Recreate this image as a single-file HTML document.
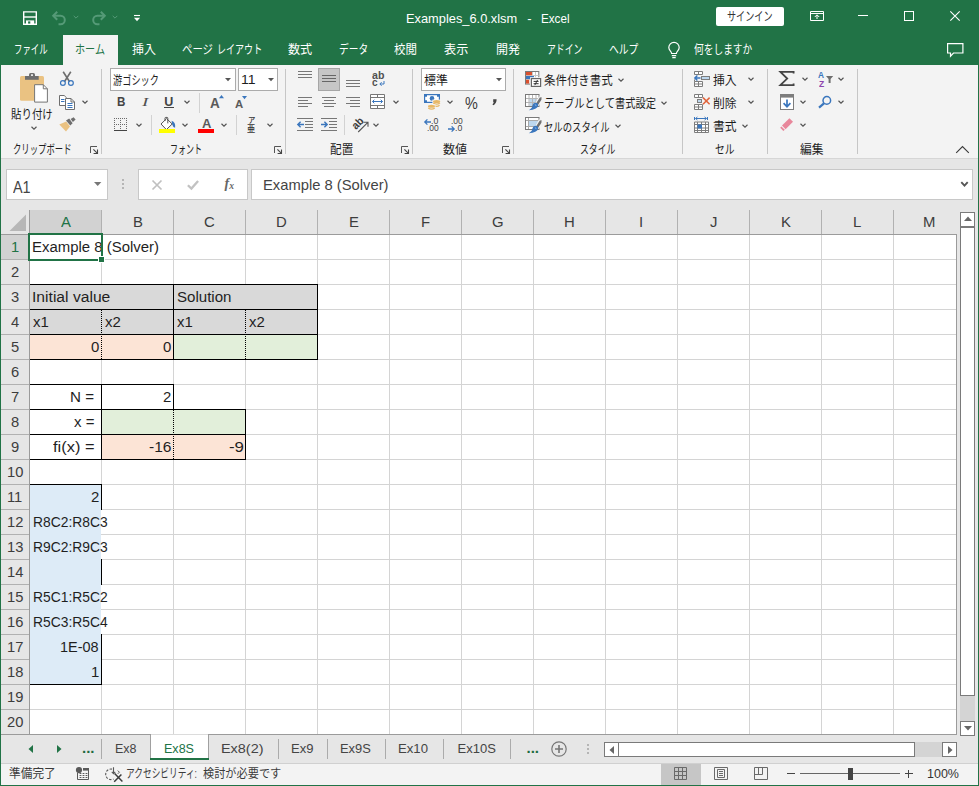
<!DOCTYPE html>
<html lang="ja"><head><meta charset="utf-8"><title>Examples_6.0.xlsm - Excel</title>
<style>
*{box-sizing:border-box;margin:0;padding:0}
html,body{width:979px;height:786px;overflow:hidden;background:#e6e6e6}
body{font-family:"Liberation Sans","Noto Sans CJK JP",sans-serif;font-size:12px;color:#262626;position:relative}
.abs{position:absolute}
svg{overflow:visible}
.t{position:absolute;white-space:nowrap;transform-origin:0 50%;display:block}
</style></head><body>
<div class="abs" style="left:0px;top:0px;width:979px;height:65px;background:#217346;"></div>
<div class="abs" style="left:1px;top:65px;width:977px;height:93px;background:#f3f3f3;"></div>
<div class="abs" style="left:1px;top:158px;width:977px;height:1px;background:#d6d6d6;"></div>
<div class="abs" style="left:1px;top:159px;width:977px;height:51px;background:#e6e6e6;"></div>
<div class="abs" style="left:1px;top:735px;width:977px;height:28px;background:#e6e6e6;"></div>
<div class="abs" style="left:1px;top:763px;width:977px;height:1px;background:#d0d0d0;"></div>
<div class="abs" style="left:1px;top:764px;width:977px;height:21px;background:#f3f3f3;"></div>
<div class="abs" style="left:30px;top:235px;width:927px;height:500px;background:#fff;"></div>
<div class="abs" style="left:30px;top:285px;width:287px;height:49px;background:#d9d9d9;"></div>
<div class="abs" style="left:30px;top:335px;width:143px;height:24px;background:#fce4d6;"></div>
<div class="abs" style="left:174px;top:335px;width:143px;height:24px;background:#e2efda;"></div>
<div class="abs" style="left:102px;top:410px;width:143px;height:24px;background:#e2efda;"></div>
<div class="abs" style="left:102px;top:435px;width:143px;height:24px;background:#fce4d6;"></div>
<div class="abs" style="left:30px;top:485px;width:71px;height:200px;background:#ddebf7;"></div>
<div class="abs" style="left:101px;top:235px;width:1px;height:500px;background:#d4d4d4;"></div>
<div class="abs" style="left:173px;top:235px;width:1px;height:500px;background:#d4d4d4;"></div>
<div class="abs" style="left:245px;top:235px;width:1px;height:500px;background:#d4d4d4;"></div>
<div class="abs" style="left:317px;top:235px;width:1px;height:500px;background:#d4d4d4;"></div>
<div class="abs" style="left:389px;top:235px;width:1px;height:500px;background:#d4d4d4;"></div>
<div class="abs" style="left:461px;top:235px;width:1px;height:500px;background:#d4d4d4;"></div>
<div class="abs" style="left:533px;top:235px;width:1px;height:500px;background:#d4d4d4;"></div>
<div class="abs" style="left:605px;top:235px;width:1px;height:500px;background:#d4d4d4;"></div>
<div class="abs" style="left:677px;top:235px;width:1px;height:500px;background:#d4d4d4;"></div>
<div class="abs" style="left:749px;top:235px;width:1px;height:500px;background:#d4d4d4;"></div>
<div class="abs" style="left:821px;top:235px;width:1px;height:500px;background:#d4d4d4;"></div>
<div class="abs" style="left:893px;top:235px;width:1px;height:500px;background:#d4d4d4;"></div>
<div class="abs" style="left:30px;top:259px;width:927px;height:1px;background:#d4d4d4;"></div>
<div class="abs" style="left:30px;top:284px;width:927px;height:1px;background:#d4d4d4;"></div>
<div class="abs" style="left:30px;top:309px;width:927px;height:1px;background:#d4d4d4;"></div>
<div class="abs" style="left:30px;top:334px;width:927px;height:1px;background:#d4d4d4;"></div>
<div class="abs" style="left:30px;top:359px;width:927px;height:1px;background:#d4d4d4;"></div>
<div class="abs" style="left:30px;top:384px;width:927px;height:1px;background:#d4d4d4;"></div>
<div class="abs" style="left:30px;top:409px;width:927px;height:1px;background:#d4d4d4;"></div>
<div class="abs" style="left:30px;top:434px;width:927px;height:1px;background:#d4d4d4;"></div>
<div class="abs" style="left:30px;top:459px;width:927px;height:1px;background:#d4d4d4;"></div>
<div class="abs" style="left:30px;top:484px;width:927px;height:1px;background:#d4d4d4;"></div>
<div class="abs" style="left:30px;top:509px;width:927px;height:1px;background:#d4d4d4;"></div>
<div class="abs" style="left:30px;top:534px;width:927px;height:1px;background:#d4d4d4;"></div>
<div class="abs" style="left:30px;top:559px;width:927px;height:1px;background:#d4d4d4;"></div>
<div class="abs" style="left:30px;top:584px;width:927px;height:1px;background:#d4d4d4;"></div>
<div class="abs" style="left:30px;top:609px;width:927px;height:1px;background:#d4d4d4;"></div>
<div class="abs" style="left:30px;top:634px;width:927px;height:1px;background:#d4d4d4;"></div>
<div class="abs" style="left:30px;top:659px;width:927px;height:1px;background:#d4d4d4;"></div>
<div class="abs" style="left:30px;top:684px;width:927px;height:1px;background:#d4d4d4;"></div>
<div class="abs" style="left:30px;top:709px;width:927px;height:1px;background:#d4d4d4;"></div>
<div class="abs" style="left:30px;top:309px;width:287px;height:1px;background:#d9d9d9;"></div>
<div class="abs" style="left:101px;top:285px;width:1px;height:24px;background:#d9d9d9;"></div>
<div class="abs" style="left:245px;top:285px;width:1px;height:24px;background:#d9d9d9;"></div>
<div class="abs" style="left:101px;top:335px;width:1px;height:24px;background:#fce4d6;"></div>
<div class="abs" style="left:245px;top:335px;width:1px;height:24px;background:#e2efda;"></div>
<div class="abs" style="left:173px;top:410px;width:1px;height:24px;background:#e2efda;"></div>
<div class="abs" style="left:173px;top:435px;width:1px;height:24px;background:#fce4d6;"></div>
<div class="abs" style="left:30px;top:509px;width:71px;height:1px;background:#ddebf7;"></div>
<div class="abs" style="left:30px;top:534px;width:71px;height:1px;background:#ddebf7;"></div>
<div class="abs" style="left:30px;top:559px;width:71px;height:1px;background:#ddebf7;"></div>
<div class="abs" style="left:30px;top:584px;width:71px;height:1px;background:#ddebf7;"></div>
<div class="abs" style="left:30px;top:609px;width:71px;height:1px;background:#ddebf7;"></div>
<div class="abs" style="left:30px;top:634px;width:71px;height:1px;background:#ddebf7;"></div>
<div class="abs" style="left:30px;top:659px;width:71px;height:1px;background:#ddebf7;"></div>
<div class="abs" style="left:30px;top:284px;width:288px;height:1px;background:#000;"></div>
<div class="abs" style="left:30px;top:309px;width:288px;height:1px;background:#000;"></div>
<div class="abs" style="left:30px;top:334px;width:288px;height:1px;background:#000;"></div>
<div class="abs" style="left:30px;top:359px;width:288px;height:1px;background:#000;"></div>
<div class="abs" style="left:173px;top:284px;width:1px;height:76px;background:#000;"></div>
<div class="abs" style="left:317px;top:284px;width:1px;height:76px;background:#000;"></div>
<div class="abs" style="left:101px;top:310px;width:1px;height:49px;background:none;background:repeating-linear-gradient(to bottom,#000 0 1px,transparent 1px 2px)"></div>
<div class="abs" style="left:245px;top:310px;width:1px;height:49px;background:none;background:repeating-linear-gradient(to bottom,#000 0 1px,transparent 1px 2px)"></div>
<div class="abs" style="left:30px;top:384px;width:144px;height:1px;background:#000;"></div>
<div class="abs" style="left:30px;top:409px;width:216px;height:1px;background:#000;"></div>
<div class="abs" style="left:30px;top:434px;width:216px;height:1px;background:#000;"></div>
<div class="abs" style="left:30px;top:459px;width:216px;height:1px;background:#000;"></div>
<div class="abs" style="left:101px;top:384px;width:1px;height:76px;background:#000;"></div>
<div class="abs" style="left:173px;top:384px;width:1px;height:26px;background:#000;"></div>
<div class="abs" style="left:245px;top:409px;width:1px;height:51px;background:#000;"></div>
<div class="abs" style="left:173px;top:410px;width:1px;height:49px;background:none;background:repeating-linear-gradient(to bottom,#000 0 1px,transparent 1px 2px)"></div>
<div class="abs" style="left:30px;top:484px;width:72px;height:1px;background:#000;"></div>
<div class="abs" style="left:30px;top:684px;width:72px;height:1px;background:#000;"></div>
<div class="abs" style="left:101px;top:484px;width:1px;height:26px;background:#000;"></div>
<div class="abs" style="left:101px;top:559px;width:1px;height:26px;background:#000;"></div>
<div class="abs" style="left:101px;top:634px;width:1px;height:51px;background:#000;"></div>
<div class="abs" style="left:101px;top:510px;width:1px;height:24px;background:#fff;"></div>
<div class="abs" style="left:101px;top:535px;width:1px;height:24px;background:#fff;"></div>
<div class="abs" style="left:101px;top:585px;width:1px;height:24px;background:#fff;"></div>
<div class="abs" style="left:101px;top:610px;width:1px;height:24px;background:#fff;"></div>
<div class="abs" style="left:1px;top:210px;width:957px;height:24px;background:#e6e6e6;"></div>
<div class="abs" style="left:1px;top:235px;width:28px;height:500px;background:#e6e6e6;"></div>
<div class="abs" style="left:30px;top:210px;width:71px;height:24px;background:#d2d2d2;"></div>
<div class="abs" style="left:1px;top:235px;width:28px;height:24px;background:#d2d2d2;"></div>
<div class="abs" style="left:101px;top:210px;width:1px;height:24px;background:#b1b1b1;"></div>
<div class="abs" style="left:173px;top:210px;width:1px;height:24px;background:#b1b1b1;"></div>
<div class="abs" style="left:245px;top:210px;width:1px;height:24px;background:#b1b1b1;"></div>
<div class="abs" style="left:317px;top:210px;width:1px;height:24px;background:#b1b1b1;"></div>
<div class="abs" style="left:389px;top:210px;width:1px;height:24px;background:#b1b1b1;"></div>
<div class="abs" style="left:461px;top:210px;width:1px;height:24px;background:#b1b1b1;"></div>
<div class="abs" style="left:533px;top:210px;width:1px;height:24px;background:#b1b1b1;"></div>
<div class="abs" style="left:605px;top:210px;width:1px;height:24px;background:#b1b1b1;"></div>
<div class="abs" style="left:677px;top:210px;width:1px;height:24px;background:#b1b1b1;"></div>
<div class="abs" style="left:749px;top:210px;width:1px;height:24px;background:#b1b1b1;"></div>
<div class="abs" style="left:821px;top:210px;width:1px;height:24px;background:#b1b1b1;"></div>
<div class="abs" style="left:893px;top:210px;width:1px;height:24px;background:#b1b1b1;"></div>
<div class="abs" style="left:1px;top:259px;width:28px;height:1px;background:#b1b1b1;"></div>
<div class="abs" style="left:1px;top:284px;width:28px;height:1px;background:#b1b1b1;"></div>
<div class="abs" style="left:1px;top:309px;width:28px;height:1px;background:#b1b1b1;"></div>
<div class="abs" style="left:1px;top:334px;width:28px;height:1px;background:#b1b1b1;"></div>
<div class="abs" style="left:1px;top:359px;width:28px;height:1px;background:#b1b1b1;"></div>
<div class="abs" style="left:1px;top:384px;width:28px;height:1px;background:#b1b1b1;"></div>
<div class="abs" style="left:1px;top:409px;width:28px;height:1px;background:#b1b1b1;"></div>
<div class="abs" style="left:1px;top:434px;width:28px;height:1px;background:#b1b1b1;"></div>
<div class="abs" style="left:1px;top:459px;width:28px;height:1px;background:#b1b1b1;"></div>
<div class="abs" style="left:1px;top:484px;width:28px;height:1px;background:#b1b1b1;"></div>
<div class="abs" style="left:1px;top:509px;width:28px;height:1px;background:#b1b1b1;"></div>
<div class="abs" style="left:1px;top:534px;width:28px;height:1px;background:#b1b1b1;"></div>
<div class="abs" style="left:1px;top:559px;width:28px;height:1px;background:#b1b1b1;"></div>
<div class="abs" style="left:1px;top:584px;width:28px;height:1px;background:#b1b1b1;"></div>
<div class="abs" style="left:1px;top:609px;width:28px;height:1px;background:#b1b1b1;"></div>
<div class="abs" style="left:1px;top:634px;width:28px;height:1px;background:#b1b1b1;"></div>
<div class="abs" style="left:1px;top:659px;width:28px;height:1px;background:#b1b1b1;"></div>
<div class="abs" style="left:1px;top:684px;width:28px;height:1px;background:#b1b1b1;"></div>
<div class="abs" style="left:1px;top:709px;width:28px;height:1px;background:#b1b1b1;"></div>
<div class="abs" style="left:1px;top:234px;width:956px;height:1px;background:#9b9b9b;"></div>
<div class="abs" style="left:29px;top:210px;width:1px;height:525px;background:#9b9b9b;"></div>
<div class="abs" style="left:1px;top:734px;width:956px;height:1px;background:#9b9b9b;"></div>
<div class="abs" style="left:956px;top:234px;width:1px;height:501px;background:#9b9b9b;"></div>
<svg class="abs" style="left:9px;top:214px;" width="17" height="17" viewBox="0 0 17 17"><path d="M17 0.5 V17 H0.5 Z" fill="#b7b7b7"/></svg>
<div class="abs" style="left:30px;top:210px;width:71px;height:24px;overflow:hidden"><div class="t" style="top:0.63px;font-size:15.5px;line-height:22px;height:22px;color:#217346;left:30.54px;transform:scaleX(0.9600);">A</div></div>
<div class="abs" style="left:102px;top:210px;width:71px;height:24px;overflow:hidden"><div class="t" style="top:0.63px;font-size:15.5px;line-height:22px;height:22px;color:#3d3d3d;left:30.54px;transform:scaleX(0.9600);">B</div></div>
<div class="abs" style="left:174px;top:210px;width:71px;height:24px;overflow:hidden"><div class="t" style="top:0.63px;font-size:15.5px;line-height:22px;height:22px;color:#3d3d3d;left:30.12px;transform:scaleX(0.9600);">C</div></div>
<div class="abs" style="left:246px;top:210px;width:71px;height:24px;overflow:hidden"><div class="t" style="top:0.63px;font-size:15.5px;line-height:22px;height:22px;color:#3d3d3d;left:30.12px;transform:scaleX(0.9600);">D</div></div>
<div class="abs" style="left:318px;top:210px;width:71px;height:24px;overflow:hidden"><div class="t" style="top:0.63px;font-size:15.5px;line-height:22px;height:22px;color:#3d3d3d;left:30.54px;transform:scaleX(0.9600);">E</div></div>
<div class="abs" style="left:390px;top:210px;width:71px;height:24px;overflow:hidden"><div class="t" style="top:0.63px;font-size:15.5px;line-height:22px;height:22px;color:#3d3d3d;left:30.95px;transform:scaleX(0.9600);">F</div></div>
<div class="abs" style="left:462px;top:210px;width:71px;height:24px;overflow:hidden"><div class="t" style="top:0.63px;font-size:15.5px;line-height:22px;height:22px;color:#3d3d3d;left:29.71px;transform:scaleX(0.9600);">G</div></div>
<div class="abs" style="left:534px;top:210px;width:71px;height:24px;overflow:hidden"><div class="t" style="top:0.63px;font-size:15.5px;line-height:22px;height:22px;color:#3d3d3d;left:30.12px;transform:scaleX(0.9600);">H</div></div>
<div class="abs" style="left:606px;top:210px;width:71px;height:24px;overflow:hidden"><div class="t" style="top:0.63px;font-size:15.5px;line-height:22px;height:22px;color:#3d3d3d;left:33.43px;transform:scaleX(0.9600);">I</div></div>
<div class="abs" style="left:678px;top:210px;width:71px;height:24px;overflow:hidden"><div class="t" style="top:0.63px;font-size:15.5px;line-height:22px;height:22px;color:#3d3d3d;left:31.78px;transform:scaleX(0.9600);">J</div></div>
<div class="abs" style="left:750px;top:210px;width:71px;height:24px;overflow:hidden"><div class="t" style="top:0.63px;font-size:15.5px;line-height:22px;height:22px;color:#3d3d3d;left:30.54px;transform:scaleX(0.9600);">K</div></div>
<div class="abs" style="left:822px;top:210px;width:71px;height:24px;overflow:hidden"><div class="t" style="top:0.63px;font-size:15.5px;line-height:22px;height:22px;color:#3d3d3d;left:31.36px;transform:scaleX(0.9600);">L</div></div>
<div class="abs" style="left:894px;top:210px;width:63px;height:24px;overflow:hidden"><div class="t" style="top:0.63px;font-size:15.5px;line-height:22px;height:22px;color:#3d3d3d;left:29.30px;transform:scaleX(0.9600);">M</div></div>
<div class="t" style="top:235.63px;font-size:15.5px;line-height:22px;height:22px;color:#217346;left:10.90px;transform:scaleX(0.9500);">1</div>
<div class="t" style="top:260.63px;font-size:15.5px;line-height:22px;height:22px;color:#3d3d3d;left:10.90px;transform:scaleX(0.9500);">2</div>
<div class="t" style="top:285.63px;font-size:15.5px;line-height:22px;height:22px;color:#3d3d3d;left:10.90px;transform:scaleX(0.9500);">3</div>
<div class="t" style="top:310.63px;font-size:15.5px;line-height:22px;height:22px;color:#3d3d3d;left:10.90px;transform:scaleX(0.9500);">4</div>
<div class="t" style="top:335.63px;font-size:15.5px;line-height:22px;height:22px;color:#3d3d3d;left:10.90px;transform:scaleX(0.9500);">5</div>
<div class="t" style="top:360.63px;font-size:15.5px;line-height:22px;height:22px;color:#3d3d3d;left:10.90px;transform:scaleX(0.9500);">6</div>
<div class="t" style="top:385.63px;font-size:15.5px;line-height:22px;height:22px;color:#3d3d3d;left:10.90px;transform:scaleX(0.9500);">7</div>
<div class="t" style="top:410.63px;font-size:15.5px;line-height:22px;height:22px;color:#3d3d3d;left:10.90px;transform:scaleX(0.9500);">8</div>
<div class="t" style="top:435.63px;font-size:15.5px;line-height:22px;height:22px;color:#3d3d3d;left:10.90px;transform:scaleX(0.9500);">9</div>
<div class="t" style="top:460.63px;font-size:15.5px;line-height:22px;height:22px;color:#3d3d3d;left:6.81px;transform:scaleX(0.9500);">10</div>
<div class="t" style="top:485.63px;font-size:15.5px;line-height:22px;height:22px;color:#3d3d3d;left:7.36px;transform:scaleX(0.9500);">11</div>
<div class="t" style="top:510.63px;font-size:15.5px;line-height:22px;height:22px;color:#3d3d3d;left:6.81px;transform:scaleX(0.9500);">12</div>
<div class="t" style="top:535.63px;font-size:15.5px;line-height:22px;height:22px;color:#3d3d3d;left:6.81px;transform:scaleX(0.9500);">13</div>
<div class="t" style="top:560.63px;font-size:15.5px;line-height:22px;height:22px;color:#3d3d3d;left:6.81px;transform:scaleX(0.9500);">14</div>
<div class="t" style="top:585.63px;font-size:15.5px;line-height:22px;height:22px;color:#3d3d3d;left:6.81px;transform:scaleX(0.9500);">15</div>
<div class="t" style="top:610.63px;font-size:15.5px;line-height:22px;height:22px;color:#3d3d3d;left:6.81px;transform:scaleX(0.9500);">16</div>
<div class="t" style="top:635.63px;font-size:15.5px;line-height:22px;height:22px;color:#3d3d3d;left:6.81px;transform:scaleX(0.9500);">17</div>
<div class="t" style="top:660.63px;font-size:15.5px;line-height:22px;height:22px;color:#3d3d3d;left:6.81px;transform:scaleX(0.9500);">18</div>
<div class="t" style="top:685.63px;font-size:15.5px;line-height:22px;height:22px;color:#3d3d3d;left:6.81px;transform:scaleX(0.9500);">19</div>
<div class="t" style="top:710.63px;font-size:15.5px;line-height:22px;height:22px;color:#3d3d3d;left:6.81px;transform:scaleX(0.9500);">20</div>
<div class="t" style="top:235.63px;font-size:15.5px;line-height:22px;height:22px;color:#1f1f1f;left:32.20px;transform:scaleX(0.9636);">Example 8 (Solver)</div>
<div class="t" style="top:285.63px;font-size:15.5px;line-height:22px;height:22px;color:#1f1f1f;left:31.70px;transform:scaleX(1.0097);">Initial value</div>
<div class="t" style="top:285.63px;font-size:15.5px;line-height:22px;height:22px;color:#1f1f1f;left:176.70px;transform:scaleX(0.9729);">Solution</div>
<div class="t" style="top:310.63px;font-size:15.5px;line-height:22px;height:22px;color:#1f1f1f;left:32.70px;transform:scaleX(0.9650);">x1</div>
<div class="t" style="top:310.63px;font-size:15.5px;line-height:22px;height:22px;color:#1f1f1f;left:104.70px;transform:scaleX(0.9650);">x2</div>
<div class="t" style="top:310.63px;font-size:15.5px;line-height:22px;height:22px;color:#1f1f1f;left:176.70px;transform:scaleX(0.9650);">x1</div>
<div class="t" style="top:310.63px;font-size:15.5px;line-height:22px;height:22px;color:#1f1f1f;left:248.70px;transform:scaleX(0.9650);">x2</div>
<div class="t" style="top:335.63px;font-size:15.5px;line-height:22px;height:22px;color:#1f1f1f;left:91.18px;transform:scaleX(0.9650);">0</div>
<div class="t" style="top:335.63px;font-size:15.5px;line-height:22px;height:22px;color:#1f1f1f;left:163.18px;transform:scaleX(0.9650);">0</div>
<div class="t" style="top:385.63px;font-size:15.5px;line-height:22px;height:22px;color:#1f1f1f;left:70.00px;transform:scaleX(0.9771);">N =</div>
<div class="t" style="top:385.63px;font-size:15.5px;line-height:22px;height:22px;color:#1f1f1f;left:163.18px;transform:scaleX(0.9650);">2</div>
<div class="t" style="top:410.63px;font-size:15.5px;line-height:22px;height:22px;color:#1f1f1f;left:73.50px;transform:scaleX(0.9711);">x =</div>
<div class="t" style="top:435.63px;font-size:15.5px;line-height:22px;height:22px;color:#1f1f1f;left:52.50px;transform:scaleX(1.0590);">fi(x) =</div>
<div class="t" style="top:435.63px;font-size:15.5px;line-height:22px;height:22px;color:#1f1f1f;left:149.00px;transform:scaleX(1.0042);">-16</div>
<div class="t" style="top:435.63px;font-size:15.5px;line-height:22px;height:22px;color:#1f1f1f;left:228.50px;transform:scaleX(1.0872);">-9</div>
<div class="t" style="top:485.63px;font-size:15.5px;line-height:22px;height:22px;color:#1f1f1f;left:91.18px;transform:scaleX(0.9650);">2</div>
<div class="t" style="top:510.63px;font-size:15.5px;line-height:22px;height:22px;color:#1f1f1f;left:32.70px;transform:scaleX(0.8927);">R8C2:R8C3</div>
<div class="t" style="top:535.63px;font-size:15.5px;line-height:22px;height:22px;color:#1f1f1f;left:32.70px;transform:scaleX(0.8927);">R9C2:R9C3</div>
<div class="t" style="top:585.63px;font-size:15.5px;line-height:22px;height:22px;color:#1f1f1f;left:32.70px;transform:scaleX(0.8927);">R5C1:R5C2</div>
<div class="t" style="top:610.63px;font-size:15.5px;line-height:22px;height:22px;color:#1f1f1f;left:32.70px;transform:scaleX(0.8927);">R5C3:R5C4</div>
<div class="t" style="top:635.63px;font-size:15.5px;line-height:22px;height:22px;color:#1f1f1f;left:60.40px;transform:scaleX(0.9329);">1E-08</div>
<div class="t" style="top:660.63px;font-size:15.5px;line-height:22px;height:22px;color:#1f1f1f;left:91.18px;transform:scaleX(0.9650);">1</div>
<div class="abs" style="left:28px;top:233px;width:75px;height:28px;background:none;border:2px solid #217346"></div>
<div class="abs" style="left:98px;top:256px;width:7px;height:7px;background:#217346;border:1px solid #fff"></div>
<div class="abs" style="left:6px;top:169px;width:102px;height:31px;background:#fff;border:1px solid #c8c8c8"></div>
<div class="t" style="top:177.46px;font-size:16px;line-height:22px;height:22px;color:#444;left:13.30px;transform:scaleX(0.8990);">A1</div>
<svg class="abs" style="left:93.6px;top:182.0px;" width="7.4" height="4" viewBox="0 0 7.4 4"><path d="M0 0 H7.4 L3.7 4 Z" fill="#777"/></svg>
<div class="abs" style="left:122px;top:179px;width:2px;height:2px;background:#b5b5b5;"></div>
<div class="abs" style="left:122px;top:183px;width:2px;height:2px;background:#b5b5b5;"></div>
<div class="abs" style="left:122px;top:187px;width:2px;height:2px;background:#b5b5b5;"></div>
<div class="abs" style="left:138px;top:169px;width:110px;height:31px;background:#fff;border:1px solid #c8c8c8"></div>
<svg class="abs" style="left:152px;top:179.5px;" width="10" height="10" viewBox="0 0 10 10"><path d="M0.5 0.5 L9.5 9.5 M9.5 0.5 L0.5 9.5" stroke="#c0c0c0" stroke-width="1.7" fill="none"/></svg>
<svg class="abs" style="left:187px;top:179.5px;" width="12" height="10" viewBox="0 0 12 10"><path d="M0.9 5.2 L4.4 8.6 L11.1 1" stroke="#c2c2c2" stroke-width="2.3" fill="none"/></svg>
<div class="t" style="top:174.45px;font-size:14px;line-height:20px;height:20px;color:#666;font-family:'Liberation Serif',serif;font-weight:700;font-style:italic;left:224.50px;">f</div>
<div class="t" style="top:179.81px;font-size:9.5px;line-height:13px;height:13px;color:#666;font-family:'Liberation Serif',serif;font-weight:700;font-style:italic;left:229.30px;">x</div>
<div class="abs" style="left:251px;top:169px;width:722px;height:31px;background:#fff;border:1px solid #c8c8c8"></div>
<div class="t" style="top:174.00px;font-size:15px;line-height:21px;height:21px;color:#444;left:263.40px;transform:scaleX(0.9840);">Example 8 (Solver)</div>
<svg class="abs" style="left:960px;top:181px;" width="9" height="7" viewBox="0 0 9 7"><path d="M1.3 1.2 L4.5 4.6 L7.7 1.2" stroke="#555" stroke-width="1.9" fill="none"/></svg>
<div class="abs" style="left:960px;top:212px;width:15px;height:15px;background:#fff;border:1px solid #7a7a7a"></div>
<svg class="abs" style="left:963.5px;top:216px;" width="8" height="5" viewBox="0 0 8 5"><path d="M0 5 L4 0.5 L8 5 Z" fill="#666"/></svg>
<div class="abs" style="left:960px;top:227px;width:15px;height:469px;background:#fff;border:1px solid #7a7a7a"></div>
<div class="abs" style="left:960px;top:696px;width:15px;height:25px;background:#d4d4d4;"></div>
<div class="abs" style="left:960px;top:721px;width:15px;height:15px;background:#fff;border:1px solid #7a7a7a"></div>
<svg class="abs" style="left:963.5px;top:726px;" width="8" height="5" viewBox="0 0 8 5"><path d="M0 0 L4 4.5 L8 0 Z" fill="#666"/></svg>
<div class="abs" style="left:604px;top:742px;width:15px;height:15px;background:#fff;border:1px solid #7a7a7a"></div>
<svg class="abs" style="left:608.5px;top:745.5px;" width="5" height="8" viewBox="0 0 5 8"><path d="M5 0 L0.5 4 L5 8 Z" fill="#666"/></svg>
<div class="abs" style="left:618px;top:742px;width:297px;height:15px;background:#fff;border:1px solid #7a7a7a"></div>
<div class="abs" style="left:915px;top:742px;width:27px;height:15px;background:#d4d4d4;"></div>
<div class="abs" style="left:942px;top:742px;width:15px;height:15px;background:#fff;border:1px solid #7a7a7a"></div>
<svg class="abs" style="left:947.5px;top:745.5px;" width="5" height="8" viewBox="0 0 5 8"><path d="M0 0 L4.5 4 L0 8 Z" fill="#666"/></svg>
<div class="abs" style="left:587px;top:744px;width:2px;height:2px;background:#b5b5b5;"></div>
<div class="abs" style="left:587px;top:748px;width:2px;height:2px;background:#b5b5b5;"></div>
<div class="abs" style="left:587px;top:752px;width:2px;height:2px;background:#b5b5b5;"></div>
<svg class="abs" style="left:28px;top:745px;" width="5" height="8" viewBox="0 0 5 8"><path d="M5 0 L0.5 4 L5 8 Z" fill="#217346"/></svg>
<svg class="abs" style="left:57px;top:745px;" width="5" height="8" viewBox="0 0 5 8"><path d="M0 0 L4.5 4 L0 8 Z" fill="#217346"/></svg>
<div class="t" style="top:736.90px;font-size:15px;line-height:21px;height:21px;color:#1e6b41;font-weight:700;left:82.00px;">...</div>
<div class="t" style="top:736.90px;font-size:15px;line-height:21px;height:21px;color:#1e6b41;font-weight:700;left:526.50px;">...</div>
<div class="abs" style="left:150px;top:735px;width:59px;height:23px;background:#fff;border-left:1px solid #a0a0a0;border-right:1px solid #a0a0a0"></div>
<div class="abs" style="left:151px;top:734px;width:57px;height:1px;background:#dcdcdc;"></div>
<div class="abs" style="left:150px;top:758px;width:59px;height:2px;background:#217346;"></div>
<div class="abs" style="left:101px;top:739px;width:1px;height:20px;background:#ababab;"></div>
<div class="abs" style="left:278px;top:739px;width:1px;height:20px;background:#ababab;"></div>
<div class="abs" style="left:327px;top:739px;width:1px;height:20px;background:#ababab;"></div>
<div class="abs" style="left:385px;top:739px;width:1px;height:20px;background:#ababab;"></div>
<div class="abs" style="left:443px;top:739px;width:1px;height:20px;background:#ababab;"></div>
<div class="abs" style="left:510px;top:739px;width:1px;height:20px;background:#ababab;"></div>
<div class="t" style="top:739.50px;font-size:13px;line-height:18px;height:18px;color:#444;left:114.50px;transform:scaleX(0.9596);">Ex8</div>
<div class="t" style="top:739.50px;font-size:13px;line-height:18px;height:18px;color:#217346;left:163.80px;transform:scaleX(0.9653);">Ex8S</div>
<div class="t" style="top:739.50px;font-size:13px;line-height:18px;height:18px;color:#444;left:221.30px;transform:scaleX(1.1098);">Ex8(2)</div>
<div class="t" style="top:739.50px;font-size:13px;line-height:18px;height:18px;color:#444;left:291.30px;transform:scaleX(1.0042);">Ex9</div>
<div class="t" style="top:739.50px;font-size:13px;line-height:18px;height:18px;color:#444;left:340.00px;transform:scaleX(0.9911);">Ex9S</div>
<div class="t" style="top:739.50px;font-size:13px;line-height:18px;height:18px;color:#444;left:398.30px;transform:scaleX(1.0121);">Ex10</div>
<div class="t" style="top:739.50px;font-size:13px;line-height:18px;height:18px;color:#444;left:457.50px;">Ex10S</div>
<svg class="abs" style="left:550.5px;top:741px;" width="16" height="16" viewBox="0 0 16 16"><circle cx="8" cy="8" r="7.2" fill="none" stroke="#767676" stroke-width="1.2"/><path d="M8 4 V12 M4 8 H12" stroke="#767676" stroke-width="1.6"/></svg>
<div class="t" style="top:764.67px;font-size:12.5px;line-height:18px;height:18px;color:#3b3b3b;left:9.30px;transform:scaleX(0.9357);">準備完了</div>
<div class="t" style="top:764.67px;font-size:12.5px;line-height:18px;height:18px;color:#3b3b3b;left:126.00px;transform:scaleX(0.6953);">アクセシビリティ:</div>
<div class="t" style="top:764.67px;font-size:12.5px;line-height:18px;height:18px;color:#3b3b3b;left:203.00px;transform:scaleX(0.8947);">検討が必要です</div>
<div class="abs" style="left:661px;top:764px;width:40px;height:21px;background:#c6c6c6;"></div>
<svg class="abs" style="left:674px;top:767px;" width="13" height="13" viewBox="0 0 13 13"><path d="M0.5 0.5 H12.5 V12.5 H0.5 Z M4.5 0.5 V12.5 M8.5 0.5 V12.5 M0.5 4.5 H12.5 M0.5 8.5 H12.5" fill="none" stroke="#6a6a6a" stroke-width="1"/></svg>
<svg class="abs" style="left:714px;top:767px;" width="14" height="13" viewBox="0 0 14 13"><path d="M0.5 0.5 H13.5 V12.5 H0.5 Z" fill="none" stroke="#6a6a6a"/><path d="M3.5 2.5 H10.5 V10.5 H3.5 Z M5 4.5 H9 M5 6.5 H9 M5 8.5 H9" fill="none" stroke="#6a6a6a" stroke-width="1"/></svg>
<svg class="abs" style="left:754px;top:767px;" width="14" height="13" viewBox="0 0 14 13"><path d="M0.5 0.5 H13.5 V12.5 H0.5 Z M0.5 7.5 H8.5 V0.5 M4.5 0.5 V7.5" fill="none" stroke="#6a6a6a" stroke-width="1"/></svg>
<div class="abs" style="left:787px;top:773px;width:8px;height:1px;background:#444;"></div>
<div class="abs" style="left:800px;top:773px;width:100px;height:1px;background:#666;"></div>
<div class="abs" style="left:848px;top:768px;width:5px;height:12px;background:#444;"></div>
<div class="abs" style="left:905px;top:773px;width:8px;height:1px;background:#444;"></div>
<div class="abs" style="left:908px;top:770px;width:1px;height:8px;background:#444;"></div>
<div class="t" style="top:765.84px;font-size:12px;line-height:17px;height:17px;color:#333;left:926.50px;transform:scaleX(1.0422);">100%</div>
<svg class="abs" style="left:23px;top:11px;" width="14" height="14" viewBox="0 0 14 14"><path d="M0.7 0.9 H13.3 V13.3 H0.7 Z" fill="none" stroke="#fff" stroke-width="1.4"/><path d="M1 6 H13" stroke="#fff" stroke-width="1.4"/><path d="M3 9.4 H11.2 V13.5 H3 Z" fill="#fff"/><rect x="5.1" y="10.4" width="2.2" height="2.2" fill="#217346"/></svg>
<svg class="abs" style="left:52px;top:10.5px;" width="15" height="14" viewBox="0 0 15 14"><path d="M1.2 4.8 H8.6 A4.2 4.2 0 0 1 8.6 13.2 H6.5" fill="none" stroke="#559a77" stroke-width="2"/><path d="M5.2 0.8 L1.2 4.8 L5.2 8.8" fill="none" stroke="#559a77" stroke-width="2"/></svg>
<svg class="abs" style="left:72px;top:14px;" width="8" height="6" viewBox="0 0 8 6"><path d="M1.7000000000000002 1.85 L4 4.15 L6.3 1.85" fill="none" stroke="#559a77" stroke-width="1"/></svg>
<svg class="abs" style="left:90.5px;top:10.5px;" width="15" height="14" viewBox="0 0 15 14"><path d="M13.8 4.8 H6.4 A4.2 4.2 0 0 0 6.4 13.2 H8.5" fill="none" stroke="#559a77" stroke-width="2"/><path d="M9.8 0.8 L13.8 4.8 L9.8 8.8" fill="none" stroke="#559a77" stroke-width="2"/></svg>
<svg class="abs" style="left:111.4px;top:14px;" width="8" height="6" viewBox="0 0 8 6"><path d="M1.7000000000000002 1.85 L4 4.15 L6.3 1.85" fill="none" stroke="#559a77" stroke-width="1"/></svg>
<svg class="abs" style="left:134px;top:14.5px;" width="6" height="6.5" viewBox="0 0 6 6.5"><path d="M0 0.5 H6" stroke="#fff" stroke-width="1.1"/><path d="M0 2.8 H6 L3 6.3 Z" fill="#fff"/></svg>
<div class="t" style="top:9.50px;font-size:13px;line-height:18px;height:18px;color:#fff;left:406.20px;transform:scaleX(0.9865);">Examples_6.0.xlsm</div>
<div class="t" style="top:9.50px;font-size:13px;line-height:18px;height:18px;color:#fff;left:527.30px;">-</div>
<div class="t" style="top:9.50px;font-size:13px;line-height:18px;height:18px;color:#fff;left:540.90px;transform:scaleX(0.8963);">Excel</div>
<div class="abs" style="left:716px;top:7px;width:68px;height:19px;background:#fff;border-radius:2px"></div>
<div class="t" style="top:8.47px;font-size:12.5px;line-height:18px;height:18px;color:#333;left:727.10px;transform:scaleX(0.7294);">サインイン</div>
<svg class="abs" style="left:810px;top:11px;" width="14" height="10" viewBox="0 0 14 10"><path d="M0.5 0.5 H13.5 V9.5 H0.5 Z M0.5 2.5 H13.5" fill="none" stroke="#fff" stroke-width="1"/><path d="M7 8 V4 M4.8 6 L7 3.8 L9.2 6" fill="none" stroke="#fff" stroke-width="1"/></svg>
<div class="abs" style="left:858px;top:15px;width:10px;height:1px;background:#fff;"></div>
<div class="abs" style="left:904px;top:11px;width:10px;height:10px;background:none;border:1px solid #fff"></div>
<svg class="abs" style="left:950px;top:11px;" width="10" height="10" viewBox="0 0 10 10"><path d="M0.3 0.3 L9.7 9.7 M9.7 0.3 L0.3 9.7" stroke="#fff" stroke-width="1.1" fill="none"/></svg>
<svg class="abs" style="left:946.5px;top:42.5px;" width="17" height="14" viewBox="0 0 17 14"><path d="M0.6 0.6 H15.9 V10 H6.5 L3.5 13.2 V10 H0.6 Z" fill="none" stroke="#fff" stroke-width="1.2"/></svg>
<div class="abs" style="left:63px;top:35px;width:55px;height:30px;background:#f3f3f3;"></div>
<div class="t" style="top:40.87px;font-size:12.5px;line-height:18px;height:18px;color:#fff;left:13.90px;transform:scaleX(0.6738);">ファイル</div>
<div class="t" style="top:40.87px;font-size:12.5px;line-height:18px;height:18px;color:#217346;left:75.20px;transform:scaleX(0.8077);">ホーム</div>
<div class="t" style="top:40.87px;font-size:12.5px;line-height:18px;height:18px;color:#fff;left:131.80px;transform:scaleX(0.9554);">挿入</div>
<div class="t" style="top:40.87px;font-size:12.5px;line-height:18px;height:18px;color:#fff;left:182.20px;transform:scaleX(0.8319);">ページ</div>
<div class="t" style="top:40.87px;font-size:12.5px;line-height:18px;height:18px;color:#fff;left:217.40px;transform:scaleX(0.7230);">レイアウト</div>
<div class="t" style="top:40.87px;font-size:12.5px;line-height:18px;height:18px;color:#fff;left:288.10px;transform:scaleX(0.9674);">数式</div>
<div class="t" style="top:40.87px;font-size:12.5px;line-height:18px;height:18px;color:#fff;left:338.70px;transform:scaleX(0.7757);">データ</div>
<div class="t" style="top:40.87px;font-size:12.5px;line-height:18px;height:18px;color:#fff;left:394.40px;transform:scaleX(0.9194);">校閲</div>
<div class="t" style="top:40.87px;font-size:12.5px;line-height:18px;height:18px;color:#fff;left:444.30px;transform:scaleX(0.9714);">表示</div>
<div class="t" style="top:40.87px;font-size:12.5px;line-height:18px;height:18px;color:#fff;left:496.10px;transform:scaleX(0.9594);">開発</div>
<div class="t" style="top:40.87px;font-size:12.5px;line-height:18px;height:18px;color:#fff;left:547.30px;transform:scaleX(0.7078);">アドイン</div>
<div class="t" style="top:40.87px;font-size:12.5px;line-height:18px;height:18px;color:#fff;left:608.80px;transform:scaleX(0.7810);">ヘルプ</div>
<div class="t" style="top:40.87px;font-size:12.5px;line-height:18px;height:18px;color:#fff;left:693.50px;transform:scaleX(0.7772);">何をしますか</div>
<svg class="abs" style="left:667.5px;top:41.5px;" width="12" height="17" viewBox="0 0 12 17"><path d="M3.6 11.5 C3.6 9.5 0.8 8.6 0.8 5.6 A5.2 5.2 0 0 1 11.2 5.6 C11.2 8.6 8.4 9.5 8.4 11.5 Z M3.8 13.6 H8.2 M4.3 15.6 H7.7" fill="none" stroke="#fff" stroke-width="1.2"/></svg>
<div class="abs" style="left:101px;top:69px;width:1px;height:85px;background:#c6c6c6;"></div>
<div class="abs" style="left:285px;top:69px;width:1px;height:85px;background:#c6c6c6;"></div>
<div class="abs" style="left:412px;top:69px;width:1px;height:85px;background:#c6c6c6;"></div>
<div class="abs" style="left:513px;top:69px;width:1px;height:85px;background:#c6c6c6;"></div>
<div class="abs" style="left:682px;top:69px;width:1px;height:85px;background:#c6c6c6;"></div>
<div class="abs" style="left:767px;top:69px;width:1px;height:85px;background:#c6c6c6;"></div>
<div class="abs" style="left:857px;top:69px;width:1px;height:85px;background:#c6c6c6;"></div>
<svg class="abs" style="left:20px;top:72px;" width="28" height="31" viewBox="0 0 28 31">
<rect x="0" y="4" width="24" height="24.7" rx="1.5" fill="#eac282"/>
<path d="M5 4 H18.7 V7.8 H5 Z" fill="#6e6e6e"/>
<path d="M9 4.5 V2.6 Q9 1 10.6 1 H13.3 Q15 1 15 2.6 V4.5 Z" fill="#6e6e6e"/>
<rect x="11" y="2.3" width="2" height="1.6" fill="#f3f3f3"/>
<path d="M14.6 12.7 H23.3 L27.4 16.8 V30.1 H14.6 Z" fill="#fff" stroke="#767676" stroke-width="1"/>
<path d="M23.3 12.7 V16.8 H27.4" fill="none" stroke="#767676" stroke-width="1"/>
</svg>
<div class="t" style="top:105.97px;font-size:12.5px;line-height:18px;height:18px;color:#1e1e1e;left:11.00px;transform:scaleX(0.8357);">貼り付け</div>
<svg class="abs" style="left:30.1px;top:124.9px;" width="8" height="6" viewBox="0 0 8 6"><path d="M1.5 1.75 L4 4.25 L6.5 1.75" fill="none" stroke="#505050" stroke-width="1.1"/></svg>
<svg class="abs" style="left:59px;top:71px;" width="16" height="16" viewBox="0 0 16 16">
<path d="M4.2 0.8 L10.6 10.8 M11.8 0.8 L5.4 10.8" stroke="#6e6e6e" stroke-width="1.6" fill="none"/>
<circle cx="3.9" cy="12" r="2.4" fill="none" stroke="#3a76bd" stroke-width="1.2"/>
<circle cx="11.9" cy="12" r="2.4" fill="none" stroke="#3a76bd" stroke-width="1.2"/>
</svg>
<svg class="abs" style="left:58.5px;top:94.5px;" width="16" height="15" viewBox="0 0 16 15">
<path d="M0.5 0.5 H5.2 L7.8 3.1 V10.5 H0.5 Z" fill="#fff" stroke="#6e6e6e" stroke-width="1"/>
<path d="M2 4.5 H5.5 M2 6.5 H5.5" stroke="#3a76bd" stroke-width="1"/>
<path d="M6.5 3.5 H12 L15.5 7 V14.5 H6.5 Z" fill="#fff" stroke="#6e6e6e" stroke-width="1"/>
<path d="M12 3.5 V7 H15.5" fill="none" stroke="#6e6e6e" stroke-width="1"/>
<path d="M8.5 8.5 H13.5 M8.5 10.5 H13.5 M8.5 12.5 H13.5" stroke="#3a76bd" stroke-width="1"/>
</svg>
<svg class="abs" style="left:81px;top:99px;" width="8" height="6" viewBox="0 0 8 6"><path d="M1.5 1.75 L4 4.25 L6.5 1.75" fill="none" stroke="#505050" stroke-width="1.1"/></svg>
<svg class="abs" style="left:59px;top:117px;" width="17" height="15" viewBox="0 0 17 15">
<path d="M0.3 7.6 L7.2 4.6 L11 9.4 L7 14.4 Z" fill="#eac282"/>
<path d="M7 3.6 L10.2 1.6 L13.6 6.2 L11.3 8.6 Z" fill="#6e6e6e"/>
<path d="M11.6 1.9 L14.6 0.2 L16.6 2.6 L13.9 4.9 Z" fill="#6e6e6e"/>
</svg>
<div class="t" style="top:140.97px;font-size:12.5px;line-height:18px;height:18px;color:#1e1e1e;left:13.30px;transform:scaleX(0.6696);">クリップボード</div>
<svg class="abs" style="left:90px;top:146px;" width="8" height="8" viewBox="0 0 8 8"><path d="M0.5 7 V0.5 H7" fill="none" stroke="#555" stroke-width="1"/><path d="M3.4 3.4 L7.2 7.2" fill="none" stroke="#444" stroke-width="1.1"/><path d="M7.5 3.6 V7.5 H3.6" fill="none" stroke="#444" stroke-width="1.1"/></svg>
<div class="abs" style="left:110px;top:68px;width:126px;height:23px;background:#fff;border:1px solid #ababab"></div>
<div class="t" style="top:71.67px;font-size:12.5px;line-height:18px;height:18px;color:#1e1e1e;left:113.00px;transform:scaleX(0.7358);">游ゴシック</div>
<svg class="abs" style="left:225.3px;top:78.1px;" width="6" height="3.2" viewBox="0 0 6 3.2"><path d="M0 0 H6 L3 3.2 Z" fill="#555"/></svg>
<div class="abs" style="left:238px;top:68px;width:40px;height:23px;background:#fff;border:1px solid #ababab"></div>
<div class="t" style="top:70.67px;font-size:12.5px;line-height:18px;height:18px;color:#1e1e1e;left:240.80px;transform:scaleX(1.1244);">11</div>
<svg class="abs" style="left:267.6px;top:78.1px;" width="6" height="3.2" viewBox="0 0 6 3.2"><path d="M0 0 H6 L3 3.2 Z" fill="#555"/></svg>
<div class="t" style="top:92.50px;font-size:13px;line-height:18px;height:18px;color:#444;font-weight:700;left:116.50px;transform:scaleX(0.8945);">B</div>
<div class="t" style="top:91.82px;font-size:13.5px;line-height:19px;height:19px;color:#505050;font-family:'Liberation Serif',serif;font-style:italic;left:141.80px;transform:scaleX(1.4222);">I</div>
<div class="t" style="top:92.67px;font-size:12.5px;line-height:18px;height:18px;color:#444;font-weight:700;left:164.30px;">U</div>
<div class="abs" style="left:164px;top:107px;width:9.5px;height:1px;background:#444;"></div>
<svg class="abs" style="left:182.8px;top:99.3px;" width="8" height="6" viewBox="0 0 8 6"><path d="M1.5 1.75 L4 4.25 L6.5 1.75" fill="none" stroke="#505050" stroke-width="1.1"/></svg>
<div class="abs" style="left:199px;top:93px;width:1px;height:20px;background:#d2d2d2;"></div>
<div class="t" style="top:93.15px;font-size:14px;line-height:20px;height:20px;color:#5a5a5a;font-weight:700;left:210.00px;transform:scaleX(0.9679);">A</div>
<svg class="abs" style="left:218.5px;top:95px;" width="5" height="3.2" viewBox="0 0 5 3.2"><path d="M0 3.2 L2.5 0 L5 3.2 Z" fill="#3a76bd"/></svg>
<div class="t" style="top:96.69px;font-size:11px;line-height:15px;height:15px;color:#5a5a5a;font-weight:700;left:234.80px;transform:scaleX(1.0310);">A</div>
<svg class="abs" style="left:242.2px;top:95.6px;" width="5" height="3.2" viewBox="0 0 5 3.2"><path d="M0 0 L2.5 3.2 L5 0 Z" fill="#3a76bd"/></svg>
<svg class="abs" style="left:114px;top:118px;" width="14" height="14" viewBox="0 0 14 14">
<path d="M0 0.5 H13 M0.5 0 V12 M12.5 0 V12 M6.5 0 V12 M0 6.5 H13" stroke="#6a6a6a" stroke-width="1" stroke-dasharray="1 1" shape-rendering="crispEdges" fill="none"/>
<path d="M0 12.5 H13" stroke="#444" stroke-width="1" shape-rendering="crispEdges"/>
</svg>
<svg class="abs" style="left:134.8px;top:122.4px;" width="8" height="6" viewBox="0 0 8 6"><path d="M1.5 1.75 L4 4.25 L6.5 1.75" fill="none" stroke="#505050" stroke-width="1.1"/></svg>
<div class="abs" style="left:151px;top:115px;width:1px;height:20px;background:#d2d2d2;"></div>
<svg class="abs" style="left:159px;top:117px;" width="17" height="12" viewBox="0 0 17 12">
<path d="M7.6 1.6 L13.2 7 L7.4 12.6 L2 7 Z" fill="#fff" stroke="#555" stroke-width="1"/>
<path d="M6 4 V1.2 Q6 0.4 6.8 0.4 H8 Q8.8 0.4 8.8 1.2 V6.4" fill="none" stroke="#555" stroke-width="1"/>
<path d="M12.6 3.8 Q16.9 5.2 16.1 10.8 Q13.8 9.8 13.2 7.4 Z" fill="#3a76bd"/>
</svg>
<div class="abs" style="left:159px;top:129px;width:16px;height:4px;background:#ffff00;"></div>
<svg class="abs" style="left:180.8px;top:122.4px;" width="8" height="6" viewBox="0 0 8 6"><path d="M1.5 1.75 L4 4.25 L6.5 1.75" fill="none" stroke="#505050" stroke-width="1.1"/></svg>
<div class="t" style="top:114.42px;font-size:13.5px;line-height:19px;height:19px;color:#5a5a5a;font-weight:700;left:201.60px;transform:scaleX(0.9641);">A</div>
<div class="abs" style="left:198px;top:129px;width:16px;height:4px;background:#ff0000;"></div>
<svg class="abs" style="left:219.6px;top:122.4px;" width="8" height="6" viewBox="0 0 8 6"><path d="M1.5 1.75 L4 4.25 L6.5 1.75" fill="none" stroke="#505050" stroke-width="1.1"/></svg>
<div class="abs" style="left:236px;top:115px;width:1px;height:20px;background:#d2d2d2;"></div>
<div class="t" style="top:114.93px;font-size:8px;line-height:11px;height:11px;color:#333;font-weight:500;left:247.60px;transform:scaleX(0.9250);">ア</div>
<div class="t" style="top:122.41px;font-size:9.5px;line-height:13px;height:13px;color:#333;font-weight:500;left:247.40px;transform:scaleX(0.8617);">亜</div>
<svg class="abs" style="left:266px;top:122.4px;" width="8" height="6" viewBox="0 0 8 6"><path d="M1.5 1.75 L4 4.25 L6.5 1.75" fill="none" stroke="#505050" stroke-width="1.1"/></svg>
<div class="t" style="top:140.97px;font-size:12.5px;line-height:18px;height:18px;color:#1e1e1e;left:169.50px;transform:scaleX(0.6398);">フォント</div>
<svg class="abs" style="left:274px;top:146px;" width="8" height="8" viewBox="0 0 8 8"><path d="M0.5 7 V0.5 H7" fill="none" stroke="#555" stroke-width="1"/><path d="M3.4 3.4 L7.2 7.2" fill="none" stroke="#444" stroke-width="1.1"/><path d="M7.5 3.6 V7.5 H3.6" fill="none" stroke="#444" stroke-width="1.1"/></svg>
<div class="abs" style="left:298px;top:71px;width:14px;height:1px;background:#777;"></div>
<div class="abs" style="left:298px;top:74px;width:14px;height:1px;background:#777;"></div>
<div class="abs" style="left:298px;top:77px;width:14px;height:1px;background:#777;"></div>
<div class="abs" style="left:318px;top:68px;width:22px;height:23px;background:#c6c6c6;border:1px solid #a6a6a6"></div>
<div class="abs" style="left:322px;top:75px;width:14px;height:1px;background:#666;"></div>
<div class="abs" style="left:322px;top:78px;width:14px;height:1px;background:#666;"></div>
<div class="abs" style="left:322px;top:81px;width:14px;height:1px;background:#666;"></div>
<div class="abs" style="left:346px;top:80px;width:14px;height:1px;background:#777;"></div>
<div class="abs" style="left:346px;top:83px;width:14px;height:1px;background:#777;"></div>
<div class="abs" style="left:346px;top:86px;width:14px;height:1px;background:#777;"></div>
<div class="t" style="top:67.86px;font-size:10.5px;line-height:15px;height:15px;color:#505050;font-weight:700;left:371.70px;transform:scaleX(1.0110);">ab</div>
<div class="t" style="top:74.86px;font-size:10.5px;line-height:15px;height:15px;color:#505050;font-weight:700;left:372.00px;transform:scaleX(0.9583);">c</div>
<svg class="abs" style="left:378.5px;top:80.5px;" width="5.5" height="5" viewBox="0 0 5.5 5"><path d="M5 0 V3 H1 M2.6 1.2 L0.8 3 L2.6 4.8" fill="none" stroke="#3a76bd" stroke-width="1"/></svg>
<div class="abs" style="left:298px;top:97px;width:14px;height:1px;background:#777;"></div>
<div class="abs" style="left:298px;top:100px;width:10px;height:1px;background:#777;"></div>
<div class="abs" style="left:298px;top:103px;width:14px;height:1px;background:#777;"></div>
<div class="abs" style="left:298px;top:106px;width:10px;height:1px;background:#777;"></div>
<div class="abs" style="left:322.0px;top:97px;width:14px;height:1px;background:#777;"></div>
<div class="abs" style="left:324.0px;top:100px;width:10px;height:1px;background:#777;"></div>
<div class="abs" style="left:322.0px;top:103px;width:14px;height:1px;background:#777;"></div>
<div class="abs" style="left:324.0px;top:106px;width:10px;height:1px;background:#777;"></div>
<div class="abs" style="left:346px;top:97px;width:14px;height:1px;background:#777;"></div>
<div class="abs" style="left:350px;top:100px;width:10px;height:1px;background:#777;"></div>
<div class="abs" style="left:346px;top:103px;width:14px;height:1px;background:#777;"></div>
<div class="abs" style="left:350px;top:106px;width:10px;height:1px;background:#777;"></div>
<svg class="abs" style="left:370px;top:94px;" width="15" height="15" viewBox="0 0 15 15">
<path d="M0.5 0.5 H14.5 V14.5 H0.5 Z M0.5 3.5 H14.5 M0.5 11.5 H14.5 M7.5 0.5 V3.5 M7.5 11.5 V14.5" fill="#fff" stroke="#777" stroke-width="1"/>
<path d="M2.5 7.5 H12.5 M4.3 5.7 L2.5 7.5 L4.3 9.3 M10.7 5.7 L12.5 7.5 L10.7 9.3" fill="none" stroke="#3a76bd" stroke-width="1"/>
</svg>
<svg class="abs" style="left:392px;top:99.2px;" width="8" height="6" viewBox="0 0 8 6"><path d="M1.5 1.75 L4 4.25 L6.5 1.75" fill="none" stroke="#505050" stroke-width="1.1"/></svg>
<div class="abs" style="left:297px;top:118px;width:16px;height:1px;background:#777;"></div>
<div class="abs" style="left:297px;top:130px;width:16px;height:1px;background:#777;"></div>
<div class="abs" style="left:305px;top:121px;width:8px;height:1px;background:#777;"></div>
<div class="abs" style="left:305px;top:124px;width:8px;height:1px;background:#777;"></div>
<div class="abs" style="left:305px;top:127px;width:8px;height:1px;background:#777;"></div>
<svg class="abs" style="left:297px;top:121px;" width="7" height="7" viewBox="0 0 7 7"><path d="M7 3.5 H1 M3.6 0.7 L0.8 3.5 L3.6 6.3" fill="none" stroke="#3a76bd" stroke-width="1.4"/></svg>
<div class="abs" style="left:321px;top:118px;width:16px;height:1px;background:#777;"></div>
<div class="abs" style="left:321px;top:130px;width:16px;height:1px;background:#777;"></div>
<div class="abs" style="left:329px;top:121px;width:8px;height:1px;background:#777;"></div>
<div class="abs" style="left:329px;top:124px;width:8px;height:1px;background:#777;"></div>
<div class="abs" style="left:329px;top:127px;width:8px;height:1px;background:#777;"></div>
<svg class="abs" style="left:321px;top:121px;" width="7" height="7" viewBox="0 0 7 7"><path d="M0 3.5 H6 M3.4 0.7 L6.2 3.5 L3.4 6.3" fill="none" stroke="#3a76bd" stroke-width="1.4"/></svg>
<div class="abs" style="left:344px;top:115px;width:1px;height:20px;background:#d2d2d2;"></div>
<div class="abs" style="left:352px;top:117px;width:18px;height:16px"><div class="abs" style="left:-1.5px;top:-1.5px;font-size:11px;line-height:14px;color:#3c3c3c;font-weight:700;transform:rotate(-45deg) scaleX(0.92);transform-origin:50% 50%">ab</div></div>
<svg class="abs" style="left:357px;top:120px;" width="12" height="13" viewBox="0 0 12 13"><path d="M1.2 12 L10.6 2.6 M6.4 2.2 H11 V6.8" fill="none" stroke="#555" stroke-width="1.1"/></svg>
<svg class="abs" style="left:371.8px;top:122.2px;" width="8" height="6" viewBox="0 0 8 6"><path d="M1.5 1.75 L4 4.25 L6.5 1.75" fill="none" stroke="#505050" stroke-width="1.1"/></svg>
<div class="t" style="top:140.97px;font-size:12.5px;line-height:18px;height:18px;color:#1e1e1e;left:329.60px;transform:scaleX(0.9314);">配置</div>
<svg class="abs" style="left:401px;top:146px;" width="8" height="8" viewBox="0 0 8 8"><path d="M0.5 7 V0.5 H7" fill="none" stroke="#555" stroke-width="1"/><path d="M3.4 3.4 L7.2 7.2" fill="none" stroke="#444" stroke-width="1.1"/><path d="M7.5 3.6 V7.5 H3.6" fill="none" stroke="#444" stroke-width="1.1"/></svg>
<div class="abs" style="left:421px;top:68px;width:85px;height:23px;background:#fff;border:1px solid #ababab"></div>
<div class="t" style="top:71.87px;font-size:12.5px;line-height:18px;height:18px;color:#1e1e1e;left:424.00px;transform:scaleX(0.9554);">標準</div>
<svg class="abs" style="left:495.7px;top:78.1px;" width="6" height="3.2" viewBox="0 0 6 3.2"><path d="M0 0 H6 L3 3.2 Z" fill="#555"/></svg>
<svg class="abs" style="left:424px;top:94px;" width="17" height="17" viewBox="0 0 17 17">
<rect x="0" y="0" width="16" height="9" fill="#3a76bd"/>
<path d="M3 1.2 H13 V2.8 H14.8 V6.2 H13 V7.8 H3 V6.2 H1.2 V2.8 H3 Z" fill="#fff"/>
<circle cx="8" cy="4.4" r="2.3" fill="#3a76bd"/>
<rect x="8.4" y="5.6" width="8.4" height="8" fill="#f3f3f3"/>
<ellipse cx="12.6" cy="7.4" rx="3.6" ry="1.5" fill="#e8b866"/>
<path d="M9.2 9 Q12.6 11.4 16 9 M9.6 11.2 Q12.6 13.4 15.6 11.2" fill="none" stroke="#e8b866" stroke-width="1.2"/>
<rect x="3.2" y="10.2" width="8.2" height="6.8" fill="#f3f3f3"/>
<ellipse cx="7.5" cy="12.3" rx="3.5" ry="1.5" fill="#e8b866"/>
<path d="M4.2 14 Q7.5 16.4 10.8 14" fill="none" stroke="#e8b866" stroke-width="1.2"/>
</svg>
<svg class="abs" style="left:446px;top:99px;" width="8" height="6" viewBox="0 0 8 6"><path d="M1.5 1.75 L4 4.25 L6.5 1.75" fill="none" stroke="#505050" stroke-width="1.1"/></svg>
<div class="t" style="top:92.86px;font-size:16px;line-height:22px;height:22px;color:#3a3a3a;left:465.30px;transform:scaleX(0.8992);">%</div>
<svg class="abs" style="left:492px;top:99px;" width="5" height="7" viewBox="0 0 5 7"><path d="M1.2 0.2 H4.6 Q4.8 3.6 1.6 6.2 L0.4 5.4 Q2 3.8 1.8 3.2 H1.2 Z" fill="#444"/></svg>
<div class="t" style="top:114.21px;font-size:9.5px;line-height:13px;height:13px;color:#444;left:431.00px;transform:scaleX(0.9197);">.0</div>
<div class="t" style="top:121.21px;font-size:9.5px;line-height:13px;height:13px;color:#444;left:426.50px;transform:scaleX(0.8927);">.00</div>
<svg class="abs" style="left:424px;top:119px;" width="7" height="6" viewBox="0 0 7 6"><path d="M7 3 H1 M3.4 0.4 L0.8 3 L3.4 5.6" fill="none" stroke="#3a76bd" stroke-width="1.3"/></svg>
<div class="t" style="top:114.21px;font-size:9.5px;line-height:13px;height:13px;color:#444;left:450.60px;transform:scaleX(0.8927);">.00</div>
<div class="t" style="top:121.21px;font-size:9.5px;line-height:13px;height:13px;color:#444;left:455.00px;transform:scaleX(0.9197);">.0</div>
<svg class="abs" style="left:448px;top:126px;" width="7" height="6" viewBox="0 0 7 6"><path d="M0 3 H6 M3.6 0.4 L6.2 3 L3.6 5.6" fill="none" stroke="#3a76bd" stroke-width="1.3"/></svg>
<div class="t" style="top:140.97px;font-size:12.5px;line-height:18px;height:18px;color:#1e1e1e;left:442.90px;transform:scaleX(0.9634);">数値</div>
<svg class="abs" style="left:502px;top:146px;" width="8" height="8" viewBox="0 0 8 8"><path d="M0.5 7 V0.5 H7" fill="none" stroke="#555" stroke-width="1"/><path d="M3.4 3.4 L7.2 7.2" fill="none" stroke="#444" stroke-width="1.1"/><path d="M7.5 3.6 V7.5 H3.6" fill="none" stroke="#444" stroke-width="1.1"/></svg>
<svg class="abs" style="left:525px;top:71px;" width="17" height="16" viewBox="0 0 17 16">
<rect x="0.5" y="0.5" width="13.3" height="12.6" fill="#fff" stroke="#7a7a7a" stroke-width="1"/>
<path d="M1 4.5 H13.5 M1 8.5 H13.5 M7.5 1 V4.5 M10.5 1 V8.5" fill="none" stroke="#c8c8c8" stroke-width="1"/>
<rect x="1" y="1" width="6" height="3.2" fill="#d9502f"/>
<rect x="1" y="5" width="8" height="3" fill="#3a76bd"/>
<rect x="1" y="8.8" width="3.2" height="3.8" fill="#d9502f"/>
<rect x="5" y="6.2" width="12" height="10.4" fill="#f3f3f3"/>
<rect x="6.4" y="7.6" width="9.2" height="7.8" fill="#fff" stroke="#666" stroke-width="1.2"/>
<path d="M8.6 10.4 H13.6 M8.6 12.7 H13.6 M12.5 9 L9.8 14.1" stroke="#333" stroke-width="1" fill="none"/>
</svg>
<svg class="abs" style="left:525px;top:94px;" width="15" height="13" viewBox="0 0 15 13">
<rect x="0.5" y="0.5" width="13.5" height="12" fill="#fff" stroke="#7a7a7a" stroke-width="1"/>
<rect x="4.5" y="5" width="7" height="7" fill="#bdd7ee"/>
<path d="M1 4.5 H13.5 M1 8.5 H13.5 M4 1 V12 M7.5 1 V12 M11 1 V12" fill="none" stroke="#b4b4b4" stroke-width="1"/>
</svg>
<svg class="abs" style="left:528px;top:97px;" width="14" height="14" viewBox="0 0 14 14">
<path d="M7 6.4 L11 -0.6 L14.6 -0.4 L14.4 3.4 L10.6 9 Z" fill="#f3f3f3"/>
<path d="M8.2 6.2 L11.8 0.6 L13.6 0.2 L13.4 2.8 L10.2 7.8 Z" fill="#707070"/>
<path d="M7.6 5.8 Q10.4 6 10.2 8.8 Q9 12.6 0.8 13.2 Q4.8 10.6 4.4 8.4 Q5.2 5.6 7.6 5.8 Z" fill="#3a76bd"/>
<path d="M6.6 7.4 Q8.4 7.2 8.4 9.2 Q7.6 8.2 6.6 7.4 Z" fill="#fff"/>
</svg>
<svg class="abs" style="left:525px;top:117px;" width="15" height="13" viewBox="0 0 15 13">
<rect x="0.5" y="0.5" width="13.5" height="12" fill="#fff" stroke="#7a7a7a" stroke-width="1"/>
<rect x="4" y="4" width="10" height="5.5" fill="#bdd7ee"/>
<path d="M1 3.5 H13.5 M1 9.5 H13.5 M3.5 1 V12" fill="none" stroke="#a8a8a8" stroke-width="1"/>
</svg>
<svg class="abs" style="left:528px;top:120px;" width="14" height="14" viewBox="0 0 14 14">
<path d="M7 6.4 L11 -0.6 L14.6 -0.4 L14.4 3.4 L10.6 9 Z" fill="#f3f3f3"/>
<path d="M8.2 6.2 L11.8 0.6 L13.6 0.2 L13.4 2.8 L10.2 7.8 Z" fill="#707070"/>
<path d="M7.6 5.8 Q10.4 6 10.2 8.8 Q9 12.6 0.8 13.2 Q4.8 10.6 4.4 8.4 Q5.2 5.6 7.6 5.8 Z" fill="#3a76bd"/>
<path d="M6.6 7.4 Q8.4 7.2 8.4 9.2 Q7.6 8.2 6.6 7.4 Z" fill="#fff"/>
</svg>
<div class="t" style="top:71.87px;font-size:12.5px;line-height:18px;height:18px;color:#1e1e1e;left:544.00px;transform:scaleX(0.9158);">条件付き書式</div>
<svg class="abs" style="left:617.3px;top:77px;" width="8" height="6" viewBox="0 0 8 6"><path d="M1.5 1.75 L4 4.25 L6.5 1.75" fill="none" stroke="#505050" stroke-width="1.1"/></svg>
<div class="t" style="top:94.87px;font-size:12.5px;line-height:18px;height:18px;color:#1e1e1e;left:544.00px;transform:scaleX(0.8212);">テーブルとして書式設定</div>
<svg class="abs" style="left:660.2px;top:99.9px;" width="8" height="6" viewBox="0 0 8 6"><path d="M1.5 1.75 L4 4.25 L6.5 1.75" fill="none" stroke="#505050" stroke-width="1.1"/></svg>
<div class="t" style="top:118.87px;font-size:12.5px;line-height:18px;height:18px;color:#1e1e1e;left:544.00px;transform:scaleX(0.7496);">セルのスタイル</div>
<svg class="abs" style="left:614.3px;top:122.8px;" width="8" height="6" viewBox="0 0 8 6"><path d="M1.5 1.75 L4 4.25 L6.5 1.75" fill="none" stroke="#505050" stroke-width="1.1"/></svg>
<div class="t" style="top:140.97px;font-size:12.5px;line-height:18px;height:18px;color:#1e1e1e;left:580.00px;transform:scaleX(0.7098);">スタイル</div>
<svg class="abs" style="left:694px;top:71px;" width="16" height="16" viewBox="0 0 16 16">
<path d="M0.5 0.5 H8.5 V3.5 H0.5 Z M4.5 0.5 V3.5" fill="#fff" stroke="#7d7d7d" stroke-width="1"/>
<path d="M0.5 10.5 H8.5 V15.5 H0.5 Z M4.5 10.5 V15.5 M0.5 13 H8.5 M0.5 10.5 V8.5" fill="#fff" stroke="#7d7d7d" stroke-width="1"/>
<rect x="7.5" y="5.5" width="8" height="3" fill="#bdd7ee" stroke="#7d7d7d" stroke-width="1"/>
<path d="M6.5 7 H1 M3.4 4.4 L0.8 7 L3.4 9.6" fill="none" stroke="#3a76bd" stroke-width="1.4"/>
</svg>
<div class="t" style="top:71.87px;font-size:12.5px;line-height:18px;height:18px;color:#1e1e1e;left:713.00px;transform:scaleX(0.9434);">挿入</div>
<svg class="abs" style="left:747px;top:76.1px;" width="8" height="6" viewBox="0 0 8 6"><path d="M1.5 1.75 L4 4.25 L6.5 1.75" fill="none" stroke="#505050" stroke-width="1.1"/></svg>
<svg class="abs" style="left:694px;top:94px;" width="17" height="16" viewBox="0 0 17 16">
<path d="M0.5 0.5 H8.5 V3.5 H0.5 Z M4.5 0.5 V3.5" fill="#fff" stroke="#7d7d7d" stroke-width="1"/>
<path d="M0.5 10.5 H8.5 V15.5 H0.5 Z M4.5 10.5 V15.5 M0.5 13 H8.5" fill="#fff" stroke="#7d7d7d" stroke-width="1"/>
<rect x="3.5" y="5.5" width="4" height="3" fill="#bdd7ee" stroke="#7d7d7d" stroke-width="1"/>
<path d="M9 3.6 L15.6 10.2 M15.6 3.6 L9 10.2" fill="none" stroke="#e0643c" stroke-width="1.5"/>
</svg>
<div class="t" style="top:94.87px;font-size:12.5px;line-height:18px;height:18px;color:#1e1e1e;left:713.00px;transform:scaleX(0.9434);">削除</div>
<svg class="abs" style="left:747px;top:99px;" width="8" height="6" viewBox="0 0 8 6"><path d="M1.5 1.75 L4 4.25 L6.5 1.75" fill="none" stroke="#505050" stroke-width="1.1"/></svg>
<svg class="abs" style="left:694px;top:117px;" width="16" height="16" viewBox="0 0 16 16">
<path d="M0.5 0 V3 M13.5 0 V3 M1.5 1.5 H12.5 M3.4 0 L1.6 1.5 L3.4 3 M10.6 0 L12.4 1.5 L10.6 3" fill="none" stroke="#3a76bd" stroke-width="1"/>
<path d="M0.5 5 H14.5 V15.5 H0.5 Z M0.5 7.5 H14.5 M0.5 11 H14.5 M0.5 13.5 H14.5 M3.5 5 V15.5 M7.5 5 V15.5 M11.5 5 V15.5" fill="#fff" stroke="#7d7d7d" stroke-width="1"/>
<rect x="3.5" y="7.5" width="4.5" height="4" fill="#3a76bd"/>
</svg>
<div class="t" style="top:118.27px;font-size:12.5px;line-height:18px;height:18px;color:#1e1e1e;left:713.00px;transform:scaleX(0.9434);">書式</div>
<svg class="abs" style="left:741px;top:123px;" width="8" height="6" viewBox="0 0 8 6"><path d="M1.5 1.75 L4 4.25 L6.5 1.75" fill="none" stroke="#505050" stroke-width="1.1"/></svg>
<div class="t" style="top:140.97px;font-size:12.5px;line-height:18px;height:18px;color:#1e1e1e;left:715.40px;transform:scaleX(0.7835);">セル</div>
<svg class="abs" style="left:779px;top:71px;" width="16" height="15" viewBox="0 0 16 15"><path d="M14.6 2.6 V0.9 H1.4 L8.2 7.6 L1.4 14.1 H14.6 V12.4" fill="none" stroke="#444" stroke-width="1.8"/></svg>
<svg class="abs" style="left:801px;top:76px;" width="8" height="6" viewBox="0 0 8 6"><path d="M1.5 1.75 L4 4.25 L6.5 1.75" fill="none" stroke="#505050" stroke-width="1.1"/></svg>
<div class="t" style="top:68.01px;font-size:9.5px;line-height:13px;height:13px;color:#3a76bd;font-weight:700;left:818.00px;transform:scaleX(0.8727);">A</div>
<div class="t" style="top:77.21px;font-size:9.5px;line-height:13px;height:13px;color:#8e44ad;font-weight:700;left:818.50px;transform:scaleX(0.8946);">Z</div>
<svg class="abs" style="left:826px;top:76px;" width="7.2" height="7" viewBox="0 0 7.2 7"><path d="M0 0 H7.2 L4.6 3 V7 H2.6 V3 Z" fill="#6e6e6e"/></svg>
<svg class="abs" style="left:837px;top:76px;" width="8" height="6" viewBox="0 0 8 6"><path d="M1.5 1.75 L4 4.25 L6.5 1.75" fill="none" stroke="#505050" stroke-width="1.1"/></svg>
<svg class="abs" style="left:780px;top:94px;" width="14" height="16" viewBox="0 0 14 16">
<rect x="0.5" y="0.5" width="13" height="15" fill="#fff" stroke="#7d7d7d" stroke-width="1"/>
<rect x="0" y="0" width="14" height="3.6" fill="#7d7d7d"/>
<path d="M7 5.6 V12.6 M3.6 9.2 L7 12.8 L10.4 9.2" fill="none" stroke="#3a76bd" stroke-width="1.7"/>
</svg>
<svg class="abs" style="left:799px;top:99px;" width="8" height="6" viewBox="0 0 8 6"><path d="M1.5 1.75 L4 4.25 L6.5 1.75" fill="none" stroke="#505050" stroke-width="1.1"/></svg>
<svg class="abs" style="left:818px;top:95px;" width="15" height="14" viewBox="0 0 15 14"><circle cx="8.8" cy="5.4" r="3.8" fill="none" stroke="#3a76bd" stroke-width="1.5"/><path d="M6 8.4 L1 12.6" stroke="#3a76bd" stroke-width="2.2" fill="none"/></svg>
<svg class="abs" style="left:837px;top:99px;" width="8" height="6" viewBox="0 0 8 6"><path d="M1.5 1.75 L4 4.25 L6.5 1.75" fill="none" stroke="#505050" stroke-width="1.1"/></svg>
<svg class="abs" style="left:780px;top:118px;" width="14" height="13" viewBox="0 0 14 13"><path d="M9.4 0.2 L13 3.8 L5.6 11.2 L2 7.6 Z" fill="#e8879b"/><path d="M1.4 8.4 L4.8 11.8 L3.4 13 L0.2 9.8 Z" fill="#e8879b"/></svg>
<svg class="abs" style="left:799px;top:122px;" width="8" height="6" viewBox="0 0 8 6"><path d="M1.5 1.75 L4 4.25 L6.5 1.75" fill="none" stroke="#505050" stroke-width="1.1"/></svg>
<div class="t" style="top:140.97px;font-size:12.5px;line-height:18px;height:18px;color:#1e1e1e;left:800.10px;transform:scaleX(0.9394);">編集</div>
<svg class="abs" style="left:956px;top:146px;" width="13" height="7" viewBox="0 0 13 7"><path d="M0.2 6.9 L6.5 0.6 L12.8 6.9" fill="none" stroke="#3a3a3a" stroke-width="1.1"/></svg>
<svg class="abs" style="left:76px;top:767px;" width="14" height="14" viewBox="0 0 14 14">
<path d="M1.5 6 V12.5 H12.5 V1.5 H7" fill="none" stroke="#595959" stroke-width="1"/>
<rect x="7" y="1" width="6" height="2.6" fill="#595959"/>
<circle cx="3" cy="3.1" r="3.1" fill="#595959"/>
<path d="M3.6 6.5 H5.4 M6.6 6.5 H8.4 M9.6 6.5 H11.4 M3.6 8.5 H5.4 M6.6 8.5 H8.4 M9.6 8.5 H11.4 M3.6 10.5 H5.4 M6.6 10.5 H8.4 M9.6 10.5 H11.4" stroke="#595959" stroke-width="1"/>
</svg>
<svg class="abs" style="left:105px;top:767px;" width="19" height="16" viewBox="0 0 19 16">
<path d="M7 2.1 A5.3 5.3 0 1 0 8.6 11.9" fill="none" stroke="#595959" stroke-width="1.1" stroke-dasharray="2.4 1.5"/>
<path d="M8.5 0.2 V6.4 M6.8 4.8 L8.5 6.6 L10.2 4.8" fill="none" stroke="#595959" stroke-width="1.1"/>
<path d="M12.8 3.6 L14.4 5.2 L12.8 6.8" fill="none" stroke="#595959" stroke-width="1"/>
<path d="M9.6 6.6 L17.4 14.6 M16.4 7.4 L9.2 14.8" fill="none" stroke="#3c3c3c" stroke-width="1.5"/>
</svg>
<div class="abs" style="left:0px;top:65px;width:1px;height:721px;background:#217346;"></div>
<div class="abs" style="left:978px;top:65px;width:1px;height:721px;background:#217346;"></div>
<div class="abs" style="left:0px;top:785px;width:979px;height:1px;background:#217346;"></div>
</body></html>
